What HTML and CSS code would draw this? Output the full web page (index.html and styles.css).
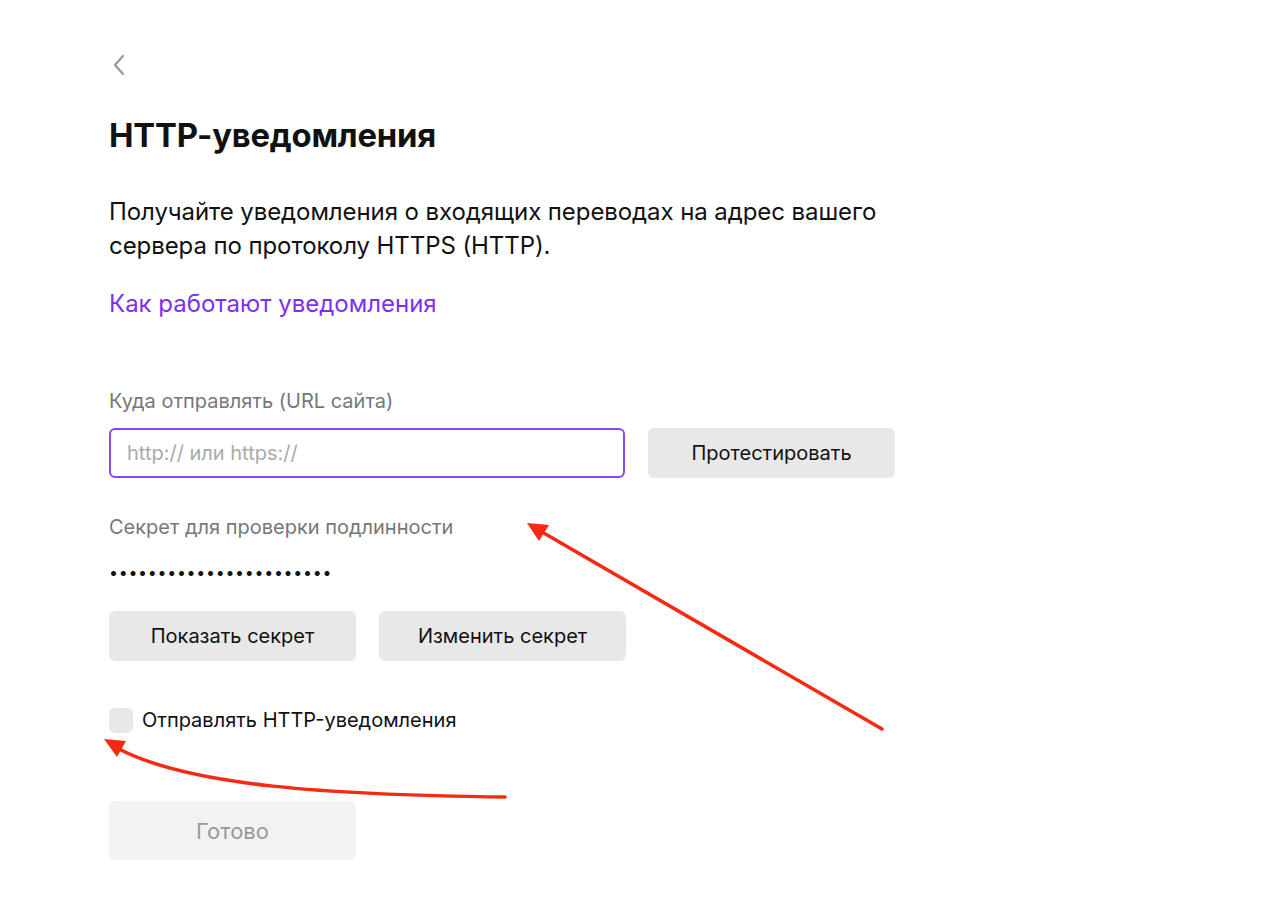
FILE: index.html
```html
<html lang="ru">

<head>
    <meta charset="UTF-8">
    <meta name="viewport" content="width=device-width, initial-scale=1.0">
    <title>HTTP-уведомления</title>
    <link rel="stylesheet" href="styles.css">
</head>

<body>
    <main class="page">
        <a class="back" href="#" aria-label="Назад">
            <svg width="14" height="22" viewBox="0 0 14 22">
                <path d="M11 2 L3 11 L11 20" fill="none" stroke="#9a9a9a" stroke-width="2.2" stroke-linecap="round" stroke-linejoin="round" />
            </svg>
        </a>

        <h1 class="title">HTTP-уведомления</h1>

        <p class="intro">Получайте уведомления о входящих переводах на адрес вашего<br>сервера по протоколу HTTPS (HTTP).</p>

        <a class="link" href="#">Как работают уведомления</a>

        <label class="field-label" for="url">Куда отправлять (URL сайта)</label>
        <div class="row">
            <input type="text" id="url" class="input" placeholder="http:// или https://">
            <button class="btn">Протестировать</button>
        </div>

        <div class="field-label">Секрет для проверки подлинности</div>
        <div class="secret">•••••••••••••••••••••••</div>
        <div class="row">
            <button class="btn">Показать секрет</button>
            <button class="btn">Изменить секрет</button>
        </div>

        <label class="check">
            <span class="box"></span>
            Отправлять HTTP-уведомления
        </label>

        <button class="btn btn-done" disabled>Готово</button>
    </main>

    <!-- red annotation arrows drawn over the page -->
    <svg class="arrows" width="1280" height="915" viewBox="0 0 1280 915">
        <line x1="882" y1="729" x2="542" y2="532" stroke="#f42a12" stroke-width="3.5" stroke-linecap="round" />
        <polygon points="527,523 549,525 539,541" fill="#f42a12" />
        <path d="M505 797 C 330 795 190 786 119 749" fill="none" stroke="#f42a12" stroke-width="3.5" stroke-linecap="round" />
        <polygon points="104,739 126,741 117,757" fill="#f42a12" />
    </svg>
</body>

</html>
```

FILE: styles.css
```css
body {
    margin: 0;
    background-color: #fff;
    font-family: Inter, 'Noto Sans', sans-serif;
    color: #111;
}

.page {
    padding: 54px 0 0 109px;
    width: 800px;
}

.back {
    display: block;
    width: 14px;
    height: 22px;
    margin-left: 3px;
}

.title {
    margin: 39px 0 0;
    font-size: 32.8px;
    line-height: 40px;
    font-weight: 700;
    letter-spacing: -0.2px;
}

.intro {
    margin: 40px 0 0;
    font-size: 24px;
    line-height: 34px;
    letter-spacing: -0.08px;
}

.link {
    display: block;
    margin-top: 24px;
    font-size: 24px;
    line-height: 34px;
    color: #7b2ff2;
    text-decoration: none;
    letter-spacing: 0;
}

.field-label {
    display: block;
    margin-top: 66px;
    font-size: 20px;
    line-height: 28px;
    color: #777;
}

.row {
    display: flex;
    gap: 23px;
    margin-top: 13px;
}

.input {
    width: 516px;
    height: 50px;
    box-sizing: border-box;
    border: 2px solid #8c44f7;
    border-radius: 6px;
    padding: 0 16px;
    font-family: inherit;
    font-size: 20px;
    color: #111;
    outline: none;
}

.input::placeholder {
    color: #aaa;
}

.btn {
    width: 247px;
    height: 50px;
    border: none;
    border-radius: 6px;
    background-color: #e8e8e8;
    font-family: inherit;
    font-size: 20px;
    color: #111;
    cursor: pointer;
}

.row + .field-label {
    margin-top: 35px;
}

.secret {
    margin-top: 21px;
    font-size: 16px;
    line-height: 20px;
    letter-spacing: 0.7px;
}

.secret + .row {
    margin-top: 29px;
}

.check {
    display: flex;
    align-items: center;
    gap: 9px;
    margin-top: 46px;
    font-size: 20px;
    line-height: 26px;
}

.box {
    width: 24px;
    height: 25px;
    border-radius: 6px;
    background-color: #e8e8e8;
}

.btn-done {
    display: block;
    height: 59px;
    margin-top: 68px;
    background-color: #f2f2f2;
    color: #999;
    font-size: 22px;
    cursor: default;
}

.arrows {
    position: absolute;
    top: 0;
    left: 0;
    pointer-events: none;
}
```
